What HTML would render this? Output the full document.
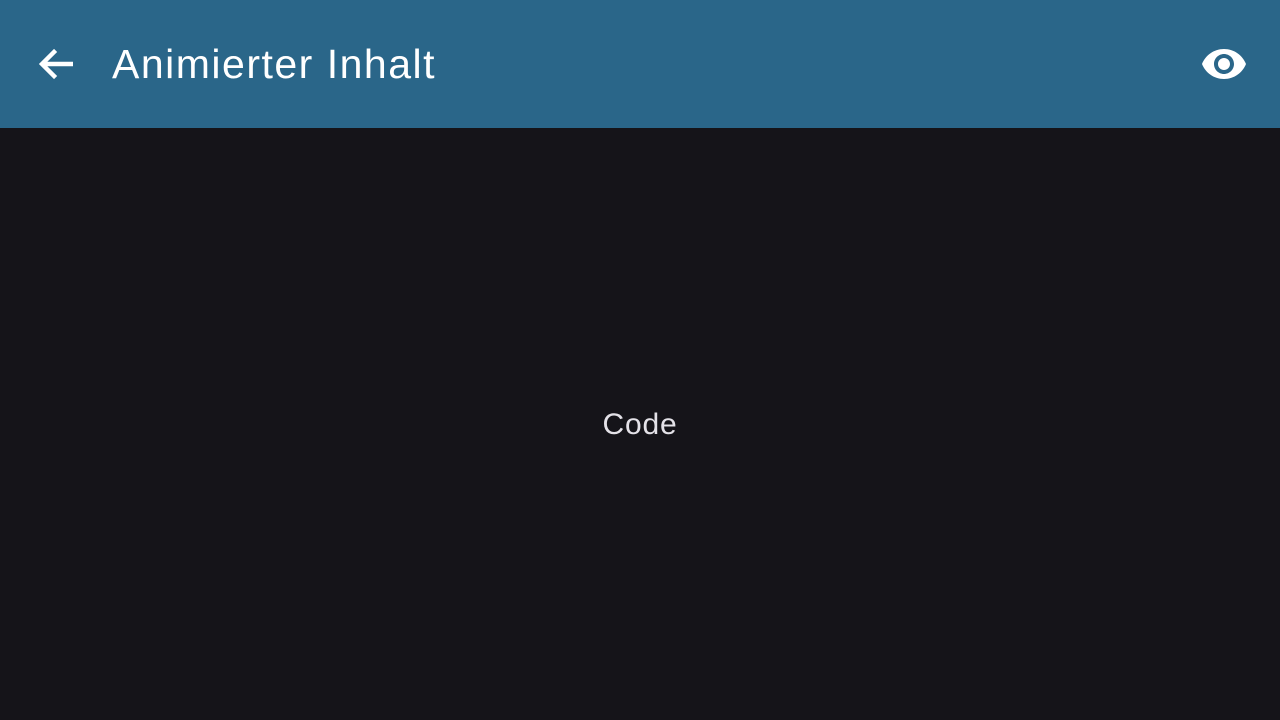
<!DOCTYPE html>
<html><head><meta charset="utf-8"><style>
html,body{margin:0;padding:0;width:1280px;height:720px;overflow:hidden;background:#151419;font-family:"Liberation Sans",sans-serif;}
.bar{position:absolute;left:0;top:0;width:1280px;height:128px;background:#2a6689;}
.title{position:absolute;left:112px;top:38px;font-size:41px;line-height:52px;color:#fff;letter-spacing:1.5px;}
svg{position:absolute;}
.code{position:absolute;left:0;width:1280px;top:407px;text-align:center;font-size:30px;line-height:36px;color:#e4e2e8;letter-spacing:0.8px;}
</style></head><body>
<div class="bar"></div>
<svg style="left:32px;top:40px" width="48" height="48" viewBox="0 0 24 24"><path fill="none" stroke="#fff" stroke-width="2.2" d="M20.5 12H5M11.8 5.2L5 12l6.8 6.8"/></svg>
<div class="title">Animierter Inhalt</div>
<svg style="left:1200px;top:40px" width="48" height="48" viewBox="0 0 24 24"><path fill="#fff" d="M12 4.5C7 4.5 2.73 7.61 1 12c1.730 4.39 6 7.5 11 7.5s9.27-3.11 11-7.5c-1.73-4.39-6-7.5-11-7.5zM12 17c-2.76 0-5-2.240-5-5s2.24-5 5-5 5 2.24 5 5-2.24 5-5 5zm0-8c-1.66 0-3 1.34-3 3s1.34 3 3 3 3-1.34 3-3-1.34-3-3-3z"/></svg>
<div class="code">Code</div>
</body></html>
